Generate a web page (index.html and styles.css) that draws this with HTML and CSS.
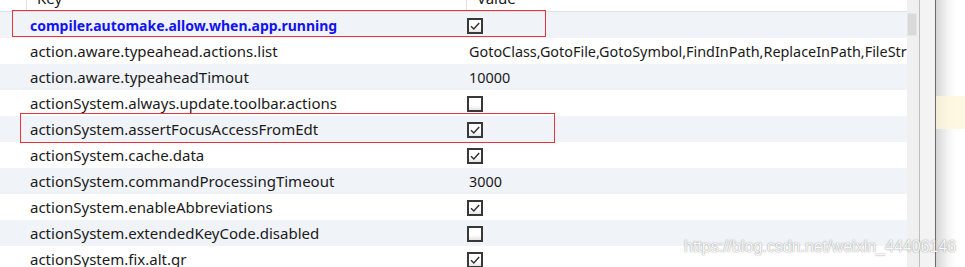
FILE: index.html
```html
<!DOCTYPE html>
<html>
	<head>
		<meta charset="UTF-8">
		<title>Registry</title>
		<link rel="stylesheet" href="styles.css">
	</head>
	<body>
		<div class="window">
			<div class="table">
				<div class="head">
					<div class="hcell first"></div>
					<div class="hcell">Key</div>
					<div class="hcell">Value</div>
				</div>
				<div class="row alt">
					<div class="key strong">compiler.automake.allow.when.app.running</div>
					<div class="val"><span class="cb on"></span></div>
				</div>
				<div class="row">
					<div class="key">action.aware.typeahead.actions.list</div>
					<div class="val"><span class="txt">GotoClass,GotoFile,GotoSymbol,FindInPath,ReplaceInPath,FileStructurePopup</span></div>
				</div>
				<div class="row alt">
					<div class="key">action.aware.typeaheadTimout</div>
					<div class="val"><span class="txt">10000</span></div>
				</div>
				<div class="row">
					<div class="key">actionSystem.always.update.toolbar.actions</div>
					<div class="val"><span class="cb"></span></div>
				</div>
				<div class="row alt">
					<div class="key">actionSystem.assertFocusAccessFromEdt</div>
					<div class="val"><span class="cb on"></span></div>
				</div>
				<div class="row">
					<div class="key">actionSystem.cache.data</div>
					<div class="val"><span class="cb on"></span></div>
				</div>
				<div class="row alt">
					<div class="key">actionSystem.commandProcessingTimeout</div>
					<div class="val"><span class="txt">3000</span></div>
				</div>
				<div class="row">
					<div class="key">actionSystem.enableAbbreviations</div>
					<div class="val"><span class="cb on"></span></div>
				</div>
				<div class="row alt">
					<div class="key">actionSystem.extendedKeyCode.disabled</div>
					<div class="val"><span class="cb"></span></div>
				</div>
				<div class="row">
					<div class="key">actionSystem.fix.alt.gr</div>
					<div class="val"><span class="cb on"></span></div>
				</div>

				<div class="mark mark1"></div>
				<div class="mark mark2"></div>
			</div>
			<div class="scroll"><div class="thumb"></div></div>
			<div class="gutter"></div>
			<div class="side"><div class="band"></div></div>
		</div>
		<div class="wm">https://blog.csdn.net/weixin_44406146</div>
	</body>
</html>
```

FILE: styles.css
```css
html, body {
	margin: 0;
	padding: 0;
	background: #fff;
	overflow: hidden;
}
body {
	position: relative;
	width: 965px;
	height: 267px;
	font-family: "Noto Sans", "Liberation Sans", sans-serif;
	font-size: 15px;
	color: #1a1a1a;
}
.window {
	display: flex;
	height: 267px;
}
.table {
	position: relative;
	width: 907px;
	flex: none;
	overflow: hidden;
}
.head {
	display: grid;
	grid-template-columns: 26px 440px 1fr;
	height: 25px;
	margin-top: -14px;
	border-bottom: 1px solid #e1e1e1;
	background: #fff;
}
.hcell {
	line-height: 25px;
	padding-left: 10px;
	border-left: 1px solid #e1e1e1;
}
.hcell.first {
	border-left: none;
	padding: 0;
}
.row {
	display: grid;
	grid-template-columns: 466px 1fr;
	height: 26px;
	line-height: 27px;
	background: #fff;
}
.row.alt {
	background: #f0f3f8;
}
.key {
	padding-left: 30px;
	white-space: nowrap;
}
.key.strong {
	font-size: 14px;
	font-weight: bold;
	color: #1212f2;
}
.val {
	display: flex;
	align-items: center;
	padding-left: 1px;
	white-space: nowrap;
	overflow: hidden;
}
.txt {
	margin-left: 2px;
	font-size: 14.4px;
}
.cb {
	box-sizing: border-box;
	width: 16px;
	height: 16px;
	border: 2px solid #383838;
	background: linear-gradient(#fff 60%, #e4e4e4);
}
.cb.on {
	background: url("data:image/svg+xml,%3Csvg xmlns='http://www.w3.org/2000/svg' width='12' height='12'%3E%3Cpath d='M2 6.2 L4.8 9 L10.2 3' fill='none' stroke='%23333' stroke-width='1.5'/%3E%3C/svg%3E") no-repeat center, linear-gradient(#fff 60%, #e4e4e4);
}
.mark {
	position: absolute;
	border: 1px solid #e8343a;
	box-sizing: border-box;
}
.mark1 {
	left: 12px;
	top: 10px;
	width: 534px;
	height: 27px;
}
.mark2 {
	left: 20px;
	top: 113px;
	width: 535px;
	height: 30px;
}
.scroll {
	width: 12px;
	flex: none;
	background: #f0f0f0;
	padding-top: 13px;
}
.thumb {
	width: 10px;
	height: 23px;
	box-sizing: border-box;
	background: #d9d9d9;
	border: 1px solid #e6e6e6;
}
.gutter {
	width: 15px;
	flex: none;
	background: #f3f3f3;
	border-left: 1px solid #bdbdbd;
}
.side {
	flex: 1;
	border-left: 1px solid #6a6a6a;
	background: linear-gradient(to right, #d6d6d6, #f4f4f4 12px, #fff 20px);
	padding-top: 96px;
}
.band {
	height: 33px;
	background: linear-gradient(to right, #f2ecd8, #fdf6df 12px, #fff8e2);
}
.wm {
	position: absolute;
	left: 684px;
	top: 238px;
	font-family: "Liberation Sans", Arial, sans-serif;
	font-size: 16px;
	color: rgba(255, 255, 255, 0.95);
	text-shadow: 0 0 1px rgba(110, 110, 110, 0.7), 0 0 2px rgba(150, 150, 150, 0.5);
	white-space: nowrap;
}
```
